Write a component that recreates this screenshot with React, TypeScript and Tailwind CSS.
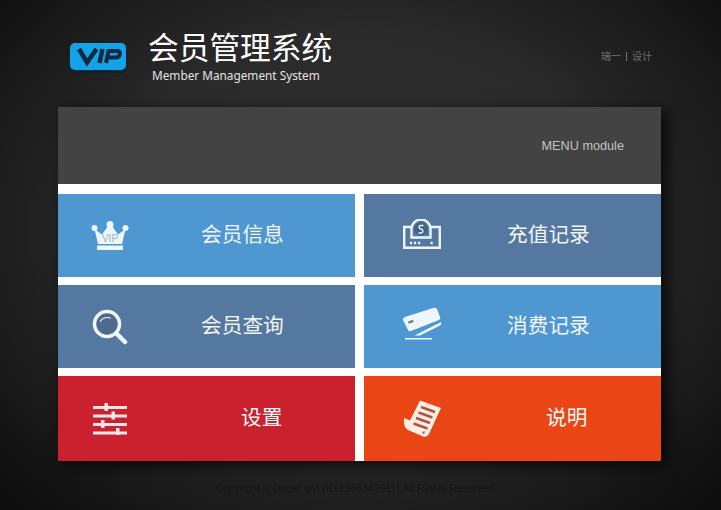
const cjk = "font-['Noto_Sans','Noto_Sans_CJK_SC',sans-serif]";

function VipLogo() {
  return (
    <svg width="58" height="32" viewBox="0 0 58 32" fill="none" stroke="#0c2a42">
      <rect x="1" y="4" width="56" height="27" rx="5" fill="#0b2231" stroke="none" />
      <rect x="1" y="1" width="56" height="27" rx="5" fill="#14a3e8" stroke="none" />
      <path d="M10 7l8 13.500L27.500 7" strokeWidth="4.500" />
      <path d="M33.500 7l-3 14" strokeWidth="4.500" />
      <path d="M37 21l2.500-12H48q3.500 0 2.800 3l-.3 1q-.6 2.500-3.500 2.500H38" strokeWidth="4" />
    </svg>
  );
}

function CrownIcon() {
  return (
    <svg width="38" height="30" viewBox="0 0 38 30" fill="#eef6fb">
      <circle cx="3.500" cy="7" r="3" />
      <circle cx="19" cy="3.500" r="3.500" />
      <circle cx="34.500" cy="7" r="3" />
      <path d="M3.500 8l7.500 5.500 6-8.500h4l6 8.500L34.500 8 31 23H7z" />
      <path d="M6 24.500h26v4.500H6z" />
      <text x="19" y="21" textAnchor="middle" fontSize="10" fill="#8fb3cd" fontFamily="'Liberation Sans', sans-serif">VIP</text>
    </svg>
  );
}

function RegisterIcon() {
  return (
    <svg className="mb-[4px]" width="38" height="30" viewBox="0 0 38 30" fill="none" stroke="#eef6fb" strokeWidth="2.400">
      <path d="M9 8H1.200v20.800h35.600V8H27" />
      <path d="M8.500 18.500V10a9.500 9.500 0 0 1 19 0v8.500z" />
      <circle cx="18" cy="10" r="6.800" fill="#3f6488" stroke="none" />
      <path d="M20.500 6.500h-3q-1.500 0-1.500 1.500t2 2t2 2-1.500 2h-3" strokeWidth="1.300" />
      <path d="M7 24h2.200M11 24h2.200M15 24h2.200M27.500 24h2.200" strokeWidth="2.600" />
    </svg>
  );
}

function SearchIcon() {
  return (
    <svg width="36" height="36" viewBox="0 0 36 36" fill="none" stroke="#eef6fb">
      <circle cx="15" cy="15" r="12.500" fill="#4c6b8e" strokeWidth="3.500" />
      <path d="M8 13q3-6 11-4" strokeWidth="1.200" />
      <path d="M25 25l8 8" strokeWidth="4.500" strokeLinecap="round" />
    </svg>
  );
}

function CardIcon() {
  return (
    <svg className="mb-[6px]" width="40" height="33" viewBox="0 0 40 33" fill="#eef6fb">
      <path d="M3 10L31 1q3-1 4 1l3 8q1 2-1 3L9 24q-2 1-3-1L1 13q-.5-2 2-3z" />
      <path d="M6 14.500l5-1.800.8 2.300-5 1.800z" fill="#6f7f8c" />
      <path d="M39 15q1 2-1 3.500L18 28.500h-5.500z" />
      <path d="M3 31h27v1.500H3z" />
    </svg>
  );
}

function SlidersIcon() {
  return (
    <svg width="34" height="32" viewBox="0 0 34 32" fill="#f6e6e8">
      <path d="M0 3h34v3H0zM0 11.500h34v3H0zM0 20h34v3H0zM0 28.500h34v3H0z" />
      <path d="M11.500 0h3.500v8h-3.500zM18.500 8.500H22v8h-3.500zM8 17h3.500v8H8zM23 25h3.500v7H23z" />
    </svg>
  );
}

function ScrollIcon() {
  return (
    <svg width="40" height="40" viewBox="0 0 40 40">
      <path d="M1 19l6 2.500L17 1.500 38 9 26 35q-2 3.500-6 2.500L5 31q-5-3-4-12z" fill="#fbeee6" />
      <path d="M18 8l14 5M15.500 13.500l14 5M13 19l14 5M10.500 24.500l14 5" stroke="#b0563a" strokeWidth="2.500" />
      <path d="M19 33l3-1-1 3.500z" fill="#b0563a" />
    </svg>
  );
}

function Tile({
  bg,
  label,
  icon,
  iconWidth,
  labelClass,
}: {
  bg: string;
  label: string;
  icon: React.ReactNode;
  iconWidth: string;
  labelClass: string;
}) {
  return (
    <div className={`flex items-center ${bg}`}>
      <div className={`flex shrink-0 justify-center ${iconWidth}`}>{icon}</div>
      <span className={`pb-[2px] text-[20.700px] leading-none text-[#f2f6f9] ${labelClass}`}>{label}</span>
    </div>
  );
}

export default function App() {
  return (
    <div className={`h-[510px] w-[721px] overflow-hidden bg-[radial-gradient(ellipse_at_50%_45%,#323232_0%,#2a2a2a_50%,#0c0c0c_100%)] ${cjk}`}>
      <header className="flex h-[107px] px-[69px]">
        <div className="mt-[42px]">
          <VipLogo />
        </div>
        <div className="ml-[21px] mt-[26px]">
          <h1 className="text-[30.700px] font-normal leading-[42px] text-white">会员管理系统</h1>
          <p className="ml-[4px] mt-[-1px] text-[11.800px] leading-[16px] text-[#e4e4e4]">Member Management System</p>
        </div>
        <div className="ml-auto mt-[49px] flex h-[14px] items-center text-[10px] leading-[14px] text-[#6e6e6e]">
          <span>瑞一</span>
          <span className="mx-[5px] h-[9px] w-px bg-[#6e6e6e]" />
          <span>设计</span>
        </div>
      </header>
      <main className="ml-[58px] h-[354px] w-[603px] shadow-[6px_4px_14px_rgba(0,0,0,0.75)]">
        <div className="flex h-[77px] items-center justify-end bg-[#434343] pr-[37px] pt-[2px]">
          <span className="font-['Liberation_Sans',sans-serif] text-[12.700px] text-[#c2c2c2]">MENU module</span>
        </div>
        <div className="grid h-[277px] grid-cols-[297px_297px] grid-rows-[83px_83px_85px] gap-x-[9px] gap-y-[8px] bg-white pt-[10px]">
          <Tile bg="bg-[#4e97d1]" label="会员信息" icon={<CrownIcon />} iconWidth="w-[104px]" labelClass="ml-[39px]" />
          <Tile bg="bg-[#54789f]" label="充值记录" icon={<RegisterIcon />} iconWidth="w-[116px]" labelClass="ml-[27px]" />
          <Tile bg="bg-[#54789f]" label="会员查询" icon={<SearchIcon />} iconWidth="w-[104px]" labelClass="ml-[39px]" />
          <Tile bg="bg-[#4e97d1]" label="消费记录" icon={<CardIcon />} iconWidth="w-[116px]" labelClass="ml-[27px]" />
          <Tile bg="bg-[#cb202d]" label="设置" icon={<SlidersIcon />} iconWidth="w-[104px]" labelClass="ml-[79px]" />
          <Tile bg="bg-[#ea4615]" label="说明" icon={<ScrollIcon />} iconWidth="w-[118px]" labelClass="ml-[64px]" />
        </div>
      </main>
      <footer className="mt-[21px] pr-[9px] text-center font-['Liberation_Sans',sans-serif] text-[10.400px] leading-[14px] text-[#151515]">
        Copyright © Docer qiyi (ID:1986342011),All Rights Reserved.
      </footer>
    </div>
  );
}
